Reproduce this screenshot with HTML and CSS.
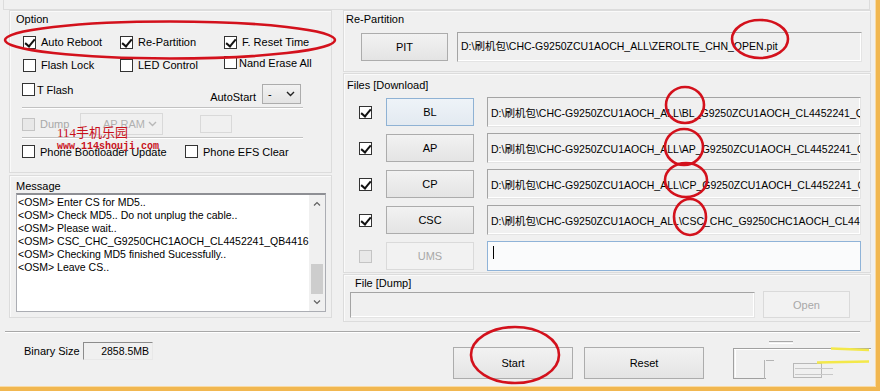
FILE: index.html
```html
<!DOCTYPE html>
<html lang="en">
<head>
  <meta charset="UTF-8">
  <title>Odin3</title>
  <link rel="stylesheet" href="styles.css">
</head>
<body>
  <div class="app">
    <div class="topstrip"></div>

    <div class="main">
      <!-- left column: options + log -->
      <div class="col-left">
        <section class="panel panel-option">
          <div class="p-title">Option</div>
          <div class="opt-grid">
            <label class="chk"><span class="cb on"></span>Auto Reboot</label>
            <label class="chk"><span class="cb on"></span>Re-Partition</label>
            <label class="chk"><span class="cb on"></span>F. Reset Time</label>
            <label class="chk"><span class="cb"></span>Flash Lock</label>
            <label class="chk"><span class="cb"></span>LED Control</label>
            <label class="chk tight up"><span class="cb"></span>Nand Erase All</label>
          </div>
          <div class="opt-row3">
            <label class="chk tight"><span class="cb"></span>T Flash</label>
            <div class="autostart">
              <span class="as-lbl">AutoStart</span>
              <div class="select as-sel"><span>-</span><svg width="9" height="6" viewBox="0 0 9 6"><polyline points="1,1 4.5,4.5 8,1" fill="none" stroke="#222" stroke-width="1.4"/></svg></div>
            </div>
          </div>
          <div class="sep"></div>
          <div class="dump-row">
            <label class="chk off dump-chk"><span class="cb"></span>Dump</label>
            <div class="select off ap-sel"><span>AP RAM</span><svg width="9" height="6" viewBox="0 0 9 6"><polyline points="1,1 4.5,4.5 8,1" fill="none" stroke="#b8b8b8" stroke-width="1.4"/></svg></div>
            <div class="mini-box"></div>
          </div>
          <div class="sep"></div>
          <div class="phone-row">
            <label class="chk boot-chk"><span class="cb"></span>Phone Bootloader Update</label>
            <label class="chk"><span class="cb"></span>Phone EFS Clear</label>
          </div>
          <div class="watermark">
            <div class="wm-1">114手机乐园</div>
            <div class="wm-2">www.114shouji.com</div>
          </div>
        </section>

        <section class="panel panel-msg">
          <div class="p-title">Message</div>
          <div class="log">
            <div class="log-text">
              <div>&lt;OSM&gt; Enter CS for MD5..</div>
              <div>&lt;OSM&gt; Check MD5.. Do not unplug the cable..</div>
              <div>&lt;OSM&gt; Please wait..</div>
              <div>&lt;OSM&gt; CSC_CHC_G9250CHC1AOCH_CL4452241_QB4416788_REV00_user_low_ship.tar.md5</div>
              <div>&lt;OSM&gt; Checking MD5 finished Sucessfully..</div>
              <div>&lt;OSM&gt; Leave CS..</div>
            </div>
            <div class="scroll">
              <div class="arr"><svg width="8" height="5" viewBox="0 0 8 5"><polyline points="1,4.5 4,1.5 7,4.5" fill="none" stroke="#606060" stroke-width="1.2"/></svg></div>
              <div class="track"></div>
              <div class="thumb"></div>
              <div class="arr"><svg width="8" height="5" viewBox="0 0 8 5"><polyline points="1,0.5 4,3.5 7,0.5" fill="none" stroke="#606060" stroke-width="1.2"/></svg></div>
            </div>
          </div>
        </section>
      </div>

      <!-- right column: files -->
      <div class="col-right">
        <section class="panel group-repart">
          <div class="p-title">Re-Partition</div>
          <div class="pit-row">
            <button class="btn pit-btn">PIT</button>
            <div class="field pit-field">D:\刷机包\CHC-G9250ZCU1AOCH_ALL\ZEROLTE_CHN_OPEN.pit</div>
          </div>
        </section>

        <section class="panel group-files">
          <div class="p-title">Files [Download]</div>
          <div class="file-rows">
            <div class="file-row">
              <span class="cb on"></span>
              <button class="btn file-btn hot">BL</button>
              <div class="field file-field">D:\刷机包\CHC-G9250ZCU1AOCH_ALL\BL_G9250ZCU1AOCH_CL4452241_QB4416788_REV00_user_low_ship.tar.md5</div>
            </div>
            <div class="file-row">
              <span class="cb on"></span>
              <button class="btn file-btn">AP</button>
              <div class="field file-field">D:\刷机包\CHC-G9250ZCU1AOCH_ALL\AP_G9250ZCU1AOCH_CL4452241_QB4416788_REV00_user_low_ship.tar.md5</div>
            </div>
            <div class="file-row">
              <span class="cb on"></span>
              <button class="btn file-btn">CP</button>
              <div class="field file-field">D:\刷机包\CHC-G9250ZCU1AOCH_ALL\CP_G9250ZCU1AOCH_CL4452241_QB4416788_REV00_user_low_ship.tar.md5</div>
            </div>
            <div class="file-row">
              <span class="cb on"></span>
              <button class="btn file-btn">CSC</button>
              <div class="field file-field">D:\刷机包\CHC-G9250ZCU1AOCH_ALL\CSC_CHC_G9250CHC1AOCH_CL4452241_QB4416788_REV00_user_low_ship.tar.md5</div>
            </div>
            <div class="file-row">
              <span class="cb off"></span>
              <button class="btn file-btn off">UMS</button>
              <div class="field file-field focus"><span class="caret"></span></div>
            </div>
          </div>
        </section>

        <section class="panel group-dump">
          <div class="p-title">File [Dump]</div>
          <div class="dump-file-row">
            <div class="field dump-field"></div>
            <button class="btn off open-btn">Open</button>
          </div>
        </section>
      </div>
    </div>

    <div class="hsep"></div>

    <div class="bottom">
      <div class="bin">
        <span>Binary Size</span>
        <div class="bin-box">2858.5MB</div>
      </div>
      <button class="btn big start-btn">Start</button>
      <button class="btn big">Reset</button>
      <svg class="ghost" width="140" height="44" viewBox="0 0 140 44">
        <line x1="36" y1="3.5" x2="60" y2="3.5" stroke="#a8a8a8"/>
        <line x1="36" y1="5.5" x2="60" y2="5.5" stroke="#fff"/>
        <line x1="0" y1="10.5" x2="138" y2="10.5" stroke="#a0a0a0"/>
        <line x1="1" y1="11.5" x2="138" y2="11.5" stroke="#fff"/>
        <line x1="0.5" y1="10" x2="0.5" y2="41" stroke="#a0a0a0"/>
        <line x1="2.5" y1="12" x2="2.5" y2="39" stroke="#fff"/>
        <line x1="0" y1="40.5" x2="33" y2="40.5" stroke="#a0a0a0"/>
        <line x1="31.5" y1="22" x2="31.5" y2="41" stroke="#b4b4b4"/>
        <line x1="33" y1="22.5" x2="41" y2="22.5" stroke="#b4b4b4"/>
        <rect x="60.5" y="25.5" width="28" height="14" fill="none" stroke="#b8b8b8"/>
        <line x1="62" y1="30.5" x2="100" y2="30.5" stroke="#c8c8c8"/>
        <line x1="62" y1="36.5" x2="100" y2="36.5" stroke="#c8c8c8"/>
        <line x1="98" y1="10.5" x2="136" y2="12" stroke="#f3e84a" stroke-width="2.5"/>
        <line x1="84" y1="24.5" x2="136" y2="23.5" stroke="#f3e84a" stroke-width="2.5"/>
      </svg>
    </div>
  </div>

  <!-- red annotation rings -->
  <svg class="marks" width="880" height="391" viewBox="0 0 880 391">
    <g fill="none" stroke="#d3111c" stroke-width="2.6">
      <ellipse cx="170" cy="40" rx="165" ry="18.5"/>
      <ellipse cx="760" cy="39" rx="28" ry="19"/>
      <ellipse cx="685" cy="105" rx="19" ry="18"/>
      <ellipse cx="684" cy="147" rx="19" ry="18"/>
      <ellipse cx="686" cy="180" rx="21" ry="17"/>
      <ellipse cx="690" cy="217" rx="16" ry="18"/>
      <ellipse cx="515" cy="355" rx="44" ry="28"/>
    </g>
  </svg>
</body>
</html>
```

FILE: styles.css
```css
* {box-sizing:border-box;margin:0;padding:0;}
body {width:880px;height:391px;overflow:hidden;position:relative;background:#f0f0f0;color:#000;font:11px "Liberation Sans","Noto Sans CJK SC",sans-serif;}

.app {width:880px;height:391px;border-right:4px solid #f1b750;border-bottom:4px solid #f1b750;box-shadow:inset -1px -1px 0 #f8dba6;}
.topstrip {height:10px;margin:0 6px 0 3px;border:1px solid #dcdcdc;border-top:0;}

.main {display:flex;height:312px;}
.col-left {width:323px;margin-left:9px;display:flex;flex-direction:column;gap:2px;}
.col-right {width:528px;margin-left:11px;display:flex;flex-direction:column;gap:1px;}

.panel {border:1px solid #dcdcdc;box-shadow:inset 1px 1px 0 #fafafa;position:relative;}
.p-title {height:14px;line-height:14px;white-space:nowrap;}

/* checkboxes */
.cb {width:13px;height:13px;flex:none;border:1px solid #333;background:#fff;position:relative;display:inline-block;}
.cb.on::after {content:"";position:absolute;left:3px;top:0;width:4px;height:8px;border:solid #111;border-width:0 2px 2px 0;transform:rotate(40deg);}
.cb.off,.chk.off .cb {border-color:#c4c4c4;background:#e8e8e8;}
.chk {display:flex;align-items:center;gap:5px;white-space:nowrap;}
.chk.tight {gap:2px;}
.chk.off {color:#a8a8a8;}

/* option panel */
.panel-option {height:163px;padding-top:1px;}
.panel-option .p-title {padding-left:6px;}
.opt-grid {margin:9px 0 0 13px;display:grid;grid-template-columns:97px 104px 110px;grid-auto-rows:14px;row-gap:9px;align-items:center;}
.opt-grid .up {align-self:start;margin-top:-2px;}
.opt-row3 {margin-top:10px;height:23px;display:flex;justify-content:space-between;padding:0 30px 0 12px;}
.opt-row3 .chk {align-self:flex-start;margin-top:1px;height:13px;}
.autostart {display:flex;align-items:center;gap:6px;margin-top:2px;height:20px;}
.as-lbl {padding-top:5px;}
.select {display:flex;align-items:center;justify-content:space-between;border:1px solid #acacac;background:linear-gradient(#f2f2f2,#e3e3e3);padding:0 5px 0 5px;}
.as-sel {width:39px;height:20px;}
.sep {margin:2px 0 0 12px;width:281px;border-top:1px solid #c2c2c2;border-bottom:1px solid #fff;}
.dump-row {margin-top:4px;height:22px;display:flex;align-items:center;padding-left:12px;}
.dump-chk {width:58px;}
.select.off {border-color:#d9d9d9;background:#f0f0f0;color:#b0b0b0;}
.ap-sel {width:83px;height:22px;padding-left:22px;}
.mini-box {margin-left:37px;width:32px;height:18px;border:1px solid #d9d9d9;}
.phone-row {margin-top:6px;height:13px;display:flex;align-items:center;padding-left:12px;}
.boot-chk {width:163px;}

.watermark {position:absolute;left:47px;top:114px;color:#c8101a;pointer-events:none;}
.wm-1 {font:13px "Liberation Serif","Noto Sans CJK SC",serif;line-height:15px;}
.wm-2 {font:bold 10px "Liberation Mono",monospace;line-height:11px;margin-top:1px;}

/* message */
.panel-msg {height:143px;padding-top:3px;}
.panel-msg .p-title {padding-left:6px;}
.log {margin-left:6px;width:310px;height:119px;display:flex;background:#fff;border:1px solid #abadb3;border-top:2px solid #8e8f94;}
.log-text {flex:1;overflow:hidden;padding:1px 0 0 1px;font-size:10.5px;line-height:13px;white-space:nowrap;}
.scroll {width:16px;display:flex;flex-direction:column;background:#f0f0f0;}
.arr {height:17px;display:flex;align-items:center;justify-content:center;}
.track {flex:1;}
.thumb {height:30px;margin:0 2px;background:#cdcdcd;}

/* buttons and fields */
.btn {font:11px "Liberation Sans",sans-serif;color:#000;border:1px solid #acacac;background:linear-gradient(#f2f2f2,#e4e4e4);display:flex;align-items:center;justify-content:center;}
.btn.hot {border-color:#8fb2d4;background:linear-gradient(#eef3f8,#e3eaf1);}
.btn.off {color:#a8a8a8;border-color:#dadada;background:#f2f2f2;}
.field {border:1px solid;border-color:#a4a4a4 #e4e4e4 #e4e4e4 #a4a4a4;box-shadow:inset -1px -1px 0 #fff;background:#f0f0f0;padding-left:3px;font-size:10.5px;white-space:nowrap;overflow:hidden;display:flex;align-items:center;}
.field.focus {border-color:#8fb3d8;background:#fafbfc;box-shadow:none;}
.caret {width:1px;height:13px;background:#000;margin:0 0 8px 2px;}

.group-repart {height:62px;padding-top:1px;}
.group-repart .p-title {padding-left:2px;}
.pit-row {margin-top:6px;display:flex;align-items:center;height:30px;}
.pit-btn {margin-left:17px;width:87px;height:28px;}
.pit-field {margin-left:9px;width:405px;height:30px;align-items:flex-start;padding-top:5px;}

.group-files {height:200px;padding-top:4px;}
.group-files .p-title {padding-left:3px;}
.file-rows {margin-top:5px;display:flex;flex-direction:column;gap:6px;}
.file-row {display:flex;align-items:center;height:30px;}
.file-row .cb {margin-left:15px;}
.file-btn {margin-left:14px;width:88px;height:28px;}
.file-field {margin-left:13px;width:374px;height:30px;}

.group-dump {height:48px;padding-top:1px;}
.group-dump .p-title {padding-left:11px;}
.dump-file-row {margin-top:1px;display:flex;align-items:center;height:27px;}
.dump-field {margin-left:6px;width:405px;height:26px;}
.open-btn {margin-left:8px;width:87px;height:27px;}

/* bottom bar */
.hsep {margin:9px 0 0 5px;width:855px;border-top:1px solid #a8a8a8;border-bottom:1px solid #fff;}
.bottom {display:flex;align-items:flex-start;padding-top:9px;}
.bin {display:flex;align-items:center;justify-content:space-between;margin-left:24px;width:129px;height:18px;}
.bin-box {width:70px;height:18px;border:1px solid;border-color:#8c8c8c #e8e8e8 #e8e8e8 #8c8c8c;text-align:right;padding-right:3px;line-height:16px;font-size:10.5px;}
.btn.big {width:120px;height:32px;margin-top:5px;}
.start-btn {margin-left:300px;margin-right:11px;}
.ghost {margin:-4px 0 0 29px;}

.marks {position:absolute;left:0;top:0;pointer-events:none;}
```
